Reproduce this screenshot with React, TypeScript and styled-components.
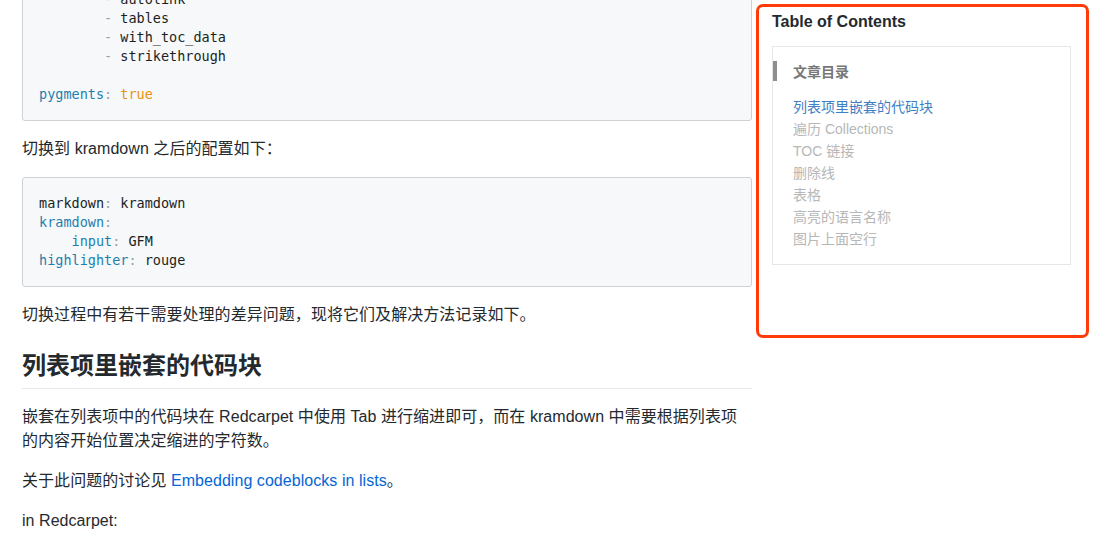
import React from 'react';
import styled, { createGlobalStyle } from 'styled-components';

const GlobalStyle = createGlobalStyle`
  html, body {
    margin: 0;
    padding: 0;
    background: #fff;
  }
  body {
    font-family: "Liberation Sans", "Noto Sans CJK SC", sans-serif;
    color: #24292e;
  }
`;

type Tok = { t: string; k?: 'key' | 'punc' | 'const' };
type Line = Tok[];

const firstBlock: Line[] = [
  [{ t: 'markdown', k: 'key' }, { t: ':', k: 'punc' }, { t: ' redcarpet' }],
  [{ t: 'redcarpet', k: 'key' }, { t: ':', k: 'punc' }],
  [{ t: '    ' }, { t: 'extensions', k: 'key' }, { t: ':', k: 'punc' }],
  [{ t: '        ' }, { t: '-', k: 'punc' }, { t: ' no_intra_emphasis' }],
  [{ t: '        ' }, { t: '-', k: 'punc' }, { t: ' fenced_code_blocks' }],
  [{ t: '        ' }, { t: '-', k: 'punc' }, { t: ' autolink' }],
  [{ t: '        ' }, { t: '-', k: 'punc' }, { t: ' tables' }],
  [{ t: '        ' }, { t: '-', k: 'punc' }, { t: ' with_toc_data' }],
  [{ t: '        ' }, { t: '-', k: 'punc' }, { t: ' strikethrough' }],
  [],
  [{ t: 'pygments', k: 'key' }, { t: ':', k: 'punc' }, { t: ' ' }, { t: 'true', k: 'const' }],
];

const secondBlock: Line[] = [
  [{ t: 'markdown' }, { t: ':', k: 'punc' }, { t: ' kramdown' }],
  [{ t: 'kramdown', k: 'key' }, { t: ':', k: 'punc' }],
  [{ t: '    ' }, { t: 'input', k: 'key' }, { t: ':', k: 'punc' }, { t: ' GFM' }],
  [{ t: 'highlighter', k: 'key' }, { t: ':', k: 'punc' }, { t: ' rouge' }],
];

const tocItems = [
  '列表项里嵌套的代码块',
  '遍历 Collections',
  'TOC 链接',
  '删除线',
  '表格',
  '高亮的语言名称',
  '图片上面空行',
];

const CodeBlock: React.FC<{ lines: Line[] }> = ({ lines }) => (
  <Pre>
    {lines.map((line, i) => (
      <CodeLine key={i}>
        {line.length === 0 ? '\u00a0' : line.map((tok, j) => (
          <Token key={j} $kind={tok.k}>{tok.t}</Token>
        ))}
      </CodeLine>
    ))}
  </Pre>
);

const App: React.FC = () => {
  return (
    <>
      <GlobalStyle />
      <Page>
        <Article>
          <CodeBlock lines={firstBlock} />
          <Para>切换到 kramdown 之后的配置如下：</Para>
          <CodeBlock lines={secondBlock} />
          <Para>切换过程中有若干需要处理的差异问题，现将它们及解决方法记录如下。</Para>
          <Heading>列表项里嵌套的代码块</Heading>
          <Para>
            嵌套在列表项中的代码块在 Redcarpet 中使用 Tab 进行缩进即可，而在 kramdown 中需要根据列表项的内容开始位置决定缩进的字符数。
          </Para>
          <Para>
            关于此问题的讨论见 <Link href="#">Embedding codeblocks in lists</Link>。
          </Para>
          <Para>in Redcarpet:</Para>
        </Article>
        <Sidebar>
          <SidebarTitle>Table of Contents</SidebarTitle>
          <TocBox>
            <TocHeader>文章目录</TocHeader>
            <TocList>
              {tocItems.map((item, i) => (
                <TocItem key={item} $active={i === 0}>{item}</TocItem>
              ))}
            </TocList>
          </TocBox>
        </Sidebar>
      </Page>
    </>
  );
};

export default App;

const Page = styled.div`
  display: flex;
  align-items: flex-start;
  gap: 4px;
  height: 548px;
  overflow: hidden;
  padding-left: 22px;
`;

const Article = styled.div`
  width: 730px;
  flex-shrink: 0;
  margin-top: -122px;
  font-size: 16px;
  line-height: 24px;
`;

const Pre = styled.pre`
  margin: 0 0 16px;
  padding: 16px;
  background: #f6f8fa;
  border: 1px solid #cfd1d4;
  border-radius: 3px;
  font-family: "DejaVu Sans Mono", "Liberation Mono", monospace;
  font-size: 13.5px;
  line-height: 19px;
  color: #1b1f23;
`;

const CodeLine = styled.div`
  white-space: pre;
`;

const Token = styled.span<{ $kind?: 'key' | 'punc' | 'const' }>`
  color: ${({ $kind }) =>
    $kind === 'key' ? '#1f7fae' : $kind === 'punc' ? '#9aa0a6' : $kind === 'const' ? '#e8930c' : 'inherit'};
`;

const Para = styled.p`
  margin: 0 0 16px;
  padding-right: 2px;
  letter-spacing: 0.05px;
`;

const Heading = styled.h2`
  margin: 24px 0 16px;
  padding-bottom: 7px;
  font-size: 24px;
  line-height: 30px;
  font-weight: 700;
  border-bottom: 1px solid #e6e8eb;
`;

const Link = styled.a`
  color: #0366d6;
  text-decoration: none;
`;

const Sidebar = styled.aside`
  margin-top: 4px;
  width: 333px;
  height: 334px;
  box-sizing: border-box;
  border: 3px solid #ff3b0a;
  border-radius: 7px;
  padding: 3px 15px 0 13px;
`;

const SidebarTitle = styled.div`
  font-size: 16px;
  font-weight: 700;
  line-height: 24px;
  color: #24292e;
  margin-bottom: 12px;
`;

const TocBox = styled.div`
  border: 1px solid #e6e6e6;
  padding: 14px 0 14px;
`;

const TocHeader = styled.div`
  display: flex;
  align-items: center;
  height: 20px;
  padding-left: 16px;
  border-left: 4px solid #8e8e8e;
  font-size: 14px;
  font-weight: 700;
  color: #777;
  margin-bottom: 15px;
`;

const TocList = styled.ul`
  list-style: none;
  margin: 0;
  padding: 0 0 0 20px;
`;

const TocItem = styled.li<{ $active?: boolean }>`
  font-size: 14px;
  line-height: 22px;
  color: ${({ $active }) => ($active ? '#3f7fc5' : '#b7b7b7')};
`;
